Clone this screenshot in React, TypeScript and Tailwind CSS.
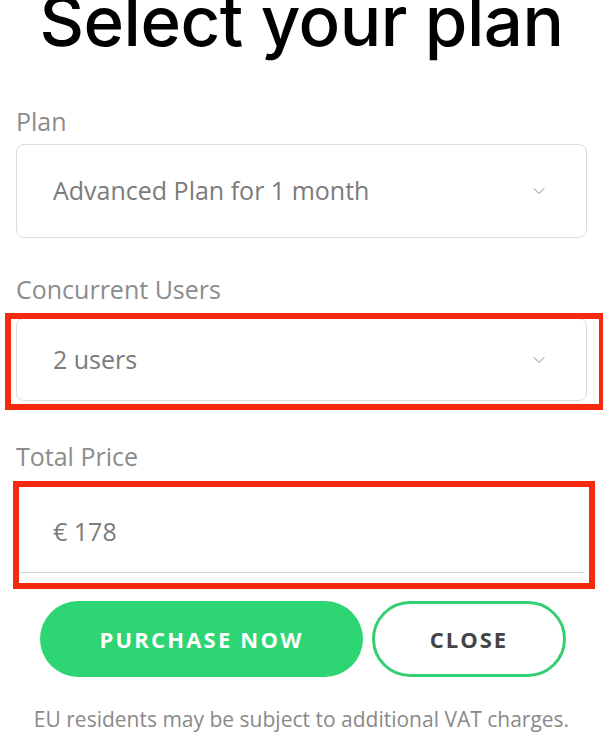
import { ChevronDown } from 'lucide-react';

const sans = { fontFamily: '"Open Sans", "Noto Sans", sans-serif' };

function Chevron() {
  return <ChevronDown className="h-5 w-5 text-[#8a8a8a]" strokeWidth={1.2} />;
}

export default function App() {
  return (
    <div className="h-[743px] w-[603px] overflow-hidden bg-white" style={sans}>
      <h1
        className="mt-[-17px] text-center text-[69px] font-medium leading-[76px] tracking-[-0.5px] text-black"
        style={{ fontFamily: 'Inter, "Noto Sans", sans-serif' }}
      >
        Select your plan
      </h1>

      <div className="px-4">
        <label className="mt-[46px] block text-[25px] leading-[32px] text-[#8c8c8c]">Plan</label>
        <div className="mt-[7px] flex h-[94px] items-center justify-between rounded-lg border border-[#dcdcdc] pl-[36px] pr-[37px]">
          <span className="text-[25px] text-[#7b7b7b]">Advanced Plan for 1 month</span>
          <Chevron />
        </div>

        <label className="mt-[35px] block text-[25px] leading-[32px] text-[#8c8c8c]">Concurrent Users</label>
        <div className="relative mt-[13px]">
          <div className="flex h-[83px] items-center justify-between rounded-lg border border-[#dcdcdc] pl-[36px] pr-[37px]">
            <span className="text-[25px] text-[#7b7b7b]">2 users</span>
            <Chevron />
          </div>
          <div className="pointer-events-none absolute left-[-11px] right-[-18px] top-[-5px] bottom-[-9px] border-[6px] border-[#f4290e]" />
        </div>

        <label className="mt-[39px] block text-[25px] leading-[32px] text-[#8c8c8c]">Total Price</label>
        <div className="relative mt-[20px]">
          <div className="ml-[4px] mr-[3px] flex h-[81px] items-center border-b border-[#d6d6d6] pl-[33px]">
            <span className="text-[25px] text-[#7b7b7b]">€ 178</span>
          </div>
          <div className="pointer-events-none absolute left-[-3px] right-[-8px] top-[-11px] bottom-[-16px] border-[6px] border-[#f4290e]" />
        </div>
      </div>

      <div className="mt-[28px] flex justify-center gap-[9px] pl-[3px]">
        <button className="h-[76px] w-[323px] rounded-full bg-[#2ed573] text-[22px] font-bold tracking-[2.2px] text-white">
          PURCHASE NOW
        </button>
        <button className="h-[76px] w-[194px] rounded-full border-[3px] border-[#35cf73] bg-white text-[22px] font-bold tracking-[2px] text-[#444]">
          CLOSE
        </button>
      </div>

      <p className="mt-[28px] text-center text-[21px] leading-[28px] text-[#8a8a8a]">
        EU residents may be subject to additional VAT charges.
      </p>
    </div>
  );
}
